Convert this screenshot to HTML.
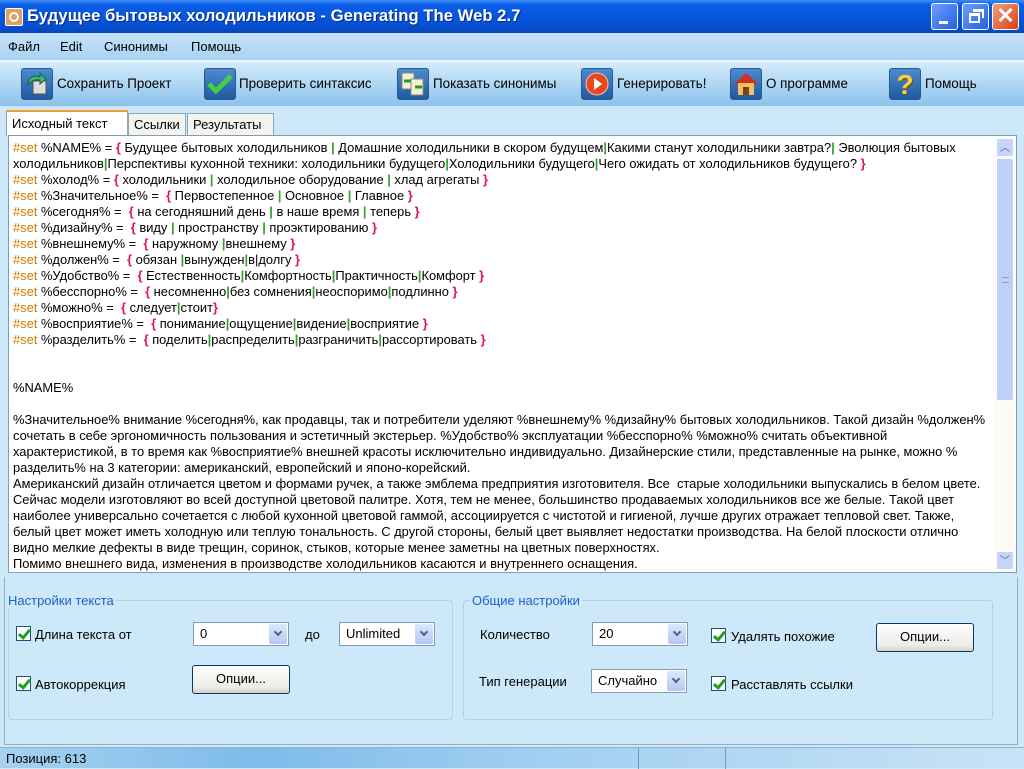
<!DOCTYPE html>
<html><head><meta charset="utf-8"><style>
*{box-sizing:border-box;margin:0;padding:0}
body{width:1024px;height:768px;overflow:hidden;background:#cde8f8;font-family:"Liberation Sans",sans-serif;font-size:13px;color:#000;position:relative}
.abs{position:absolute}
#title{left:0;top:0;width:1024px;height:33px;background:linear-gradient(#3a8cf6 0%,#0a5de6 15%,#0552d8 70%,#0646b8 100%)}
#title .t{left:27px;top:6px;color:#fff;font-weight:bold;font-size:16.7px;text-shadow:1px 1px #0a2a80;white-space:nowrap}
.wb{top:3px;width:27px;height:27px;border:1px solid #fff;border-radius:3px;background:linear-gradient(135deg,#6aa0ff,#2460e0);}
#menu{left:0;top:33px;width:1024px;height:27px;background:linear-gradient(#c6e2f8,#a9d3f3);}
#menu span{position:absolute;top:6px;font-size:13px}
#tb{left:0;top:60px;width:1024px;height:46px;border-top:2px solid #e9f5fd;background:linear-gradient(#d4ecfb,#a8d2f2 60%,#8cc2ec)}
.tbi{position:absolute;top:6px;width:32px;height:32px;border:1px solid #2a5a8a;border-radius:3px;background:linear-gradient(#4d8ad0,#1f5aa0)}
.tbt{position:absolute;top:14px;font-size:13.4px;white-space:nowrap}
.tab{position:absolute;background:#f4f4ee;border:1px solid #8ca6be;border-bottom:none;font-size:13px;padding:3px 5px 0}
#ed{left:8px;top:135px;width:1009px;height:438px;background:#fff;border:1px solid #7f9db9;overflow:hidden}
#txt{position:absolute;left:4px;top:4px;font-size:12.9px;line-height:16px;white-space:pre;letter-spacing:0}
.s{color:#d07a00}.b{color:#e0105a;font-weight:bold}.p{color:#2ca02c;font-weight:bold}
#sb{left:995px;top:137px;width:20px;height:434px;background:#fbfbf4}
.gb{position:absolute;border:1px solid #b7d0e2;border-radius:4px}
.gl{position:absolute;background:#cde8f8;color:#1f5fcf;font-size:13px;padding:0 2px}
.cb{position:absolute;width:15px;height:15px;border:1px solid #1c5180;background:#fff}
.cb:after{content:"";position:absolute;left:4px;top:0px;width:4px;height:9px;border:solid #20a020;border-width:0 3px 3px 0;transform:rotate(40deg)}
.lbl{position:absolute;font-size:13px;white-space:nowrap}
.combo{position:absolute;height:24px;background:#fff;border:1px solid #7f9db9;font-size:13px;padding:3px 6px}
.combo i{position:absolute;right:1px;top:1px;width:18px;height:20px;background:linear-gradient(#dce8fc,#b4c8f4);border-radius:2px}
.combo i:after{content:"";position:absolute;left:6px;top:5px;width:4px;height:4px;border:solid #4d6185;border-width:0 2px 2px 0;transform:rotate(45deg)}
.btn{position:absolute;height:29px;border:1px solid #003c74;border-radius:3px;background:linear-gradient(#fff,#ecebe6 80%,#d6d0c5);font-size:13px;text-align:center;line-height:26px}
#st{left:0;top:747px;width:1024px;height:21px;background:linear-gradient(90deg,#a7d1f1,#7dbbe9 25%,#9fcdf1 50%,#c8e3f6);border-top:1px solid #8fb4d4}
</style></head><body>
<div id="title" class="abs">
 <div class="abs" style="left:5px;top:8px;width:18px;height:18px;background:#e2a060;border:1px solid #fff;border-radius:2px"><div style="margin:3px;width:10px;height:10px;border:2px solid #fff;border-radius:50%"></div></div>
 <div class="t abs">Будущее бытовых холодильников - Generating The Web 2.7</div>
 <div class="wb abs" style="left:931px"><div style="position:absolute;left:7px;top:17px;width:9px;height:3px;background:#fff"></div></div>
 <div class="wb abs" style="left:962px"><div style="position:absolute;left:6px;top:9px;width:11px;height:10px;border:2px solid #fff;border-top-width:3px"></div><div style="position:absolute;left:10px;top:5px;width:11px;height:9px;border:2px solid #fff;border-top-width:3px;border-left:none;border-bottom:none"></div></div>
 <div class="wb abs" style="left:992px;background:linear-gradient(135deg,#f0a080,#d84010);color:#fff;font-weight:bold;font-size:22px;text-align:center;line-height:24px">✕</div>
</div>
<div id="menu" class="abs"><span style="left:8px">Файл</span><span style="left:60px">Edit</span><span style="left:104px">Синонимы</span><span style="left:191px">Помощь</span></div>
<div id="tb" class="abs">
 <div class="tbi" style="left:21px"><svg width="30" height="30"><rect x="11" y="12" width="13" height="13" fill="#ddd" stroke="#555"/><path d="M6 16 C6 8 12 6 18 8 L18 4 L24 10 L18 15 L18 11 C13 10 9 12 6 16Z" fill="#3cb878" stroke="#186040"/></svg></div><div class="tbt" style="left:57px">Сохранить Проект</div>
 <div class="tbi" style="left:204px"><svg width="30" height="30"><path d="M4 15 L11 22 L26 7" fill="none" stroke="#40d040" stroke-width="5"/></svg></div><div class="tbt" style="left:239px">Проверить синтаксис</div>
 <div class="tbi" style="left:397px"><svg width="30" height="30"><rect x="4" y="4" width="12" height="16" fill="#f4f0d0" stroke="#888"/><rect x="13" y="10" width="12" height="16" fill="#f4f0d0" stroke="#888"/><path d="M6 12h7M17 18h7" stroke="#20a020" stroke-width="3"/></svg></div><div class="tbt" style="left:433px">Показать синонимы</div>
 <div class="tbi" style="left:581px"><svg width="30" height="30"><circle cx="15" cy="15" r="11" fill="#e84820" stroke="#fbb" /><path d="M12 9 L20 15 L12 21Z" fill="#fff"/></svg></div><div class="tbt" style="left:617px">Генерировать!</div>
 <div class="tbi" style="left:730px"><svg width="30" height="30"><path d="M3 15 L15 4 L27 15Z" fill="#d03020"/><rect x="7" y="14" width="16" height="12" fill="#f0c060"/><rect x="12" y="18" width="6" height="8" fill="#804010"/></svg></div><div class="tbt" style="left:766px">О программе</div>
 <div class="tbi" style="left:889px"><div style="color:#f8d040;font-weight:bold;font-size:28px;text-align:center;line-height:32px;text-shadow:1px 1px #805000">?</div></div><div class="tbt" style="left:925px">Помощь</div>
</div>
<div class="tab" style="left:128px;top:113px;width:58px;height:22px">Ссылки</div>
<div class="tab" style="left:187px;top:113px;width:87px;height:22px">Результаты</div>
<div class="tab" style="left:6px;top:110px;width:122px;height:26px;background:#fff;border-top:2px solid #f0a030;padding-top:4px">Исходный текст</div>
<div id="ed" class="abs"><div id="txt"><span class="s">#set</span> %NAME% = <span class="b">{</span> Будущее бытовых холодильников <span class="p">|</span> Домашние холодильники в скором будущем<span class="p">|</span>Какими станут холодильники завтра?<span class="p">|</span> Эволюция бытовых
холодильников<span class="p">|</span>Перспективы кухонной техники: холодильники будущего<span class="p">|</span>Холодильники будущего<span class="p">|</span>Чего ожидать от холодильников будущего? <span class="b">}</span>
<span class="s">#set</span> %холод% = <span class="b">{</span> холодильники <span class="p">|</span> холодильное оборудование <span class="p">|</span> хлад агрегаты <span class="b">}</span>
<span class="s">#set</span> %Значительное% =  <span class="b">{</span> Первостепенное <span class="p">|</span> Основное <span class="p">|</span> Главное <span class="b">}</span>
<span class="s">#set</span> %сегодня% =  <span class="b">{</span> на сегодняшний день <span class="p">|</span> в наше время <span class="p">|</span> теперь <span class="b">}</span>
<span class="s">#set</span> %дизайну% =  <span class="b">{</span> виду <span class="p">|</span> пространству <span class="p">|</span> проэктированию <span class="b">}</span>
<span class="s">#set</span> %внешнему% =  <span class="b">{</span> наружному <span class="p">|</span>внешнему <span class="b">}</span>
<span class="s">#set</span> %должен% =  <span class="b">{</span> обязан <span class="p">|</span>вынужден<span class="p">|</span>в|долгу <span class="b">}</span>
<span class="s">#set</span> %Удобство% =  <span class="b">{</span> Естественность<span class="p">|</span>Комфортность<span class="p">|</span>Практичность<span class="p">|</span>Комфорт <span class="b">}</span>
<span class="s">#set</span> %бесспорно% =  <span class="b">{</span> несомненно<span class="p">|</span>без сомнения<span class="p">|</span>неоспоримо<span class="p">|</span>подлинно <span class="b">}</span>
<span class="s">#set</span> %можно% =  <span class="b">{</span> следует<span class="p">|</span>стоит<span class="b">}</span>
<span class="s">#set</span> %восприятие% =  <span class="b">{</span> понимание<span class="p">|</span>ощущение<span class="p">|</span>видение<span class="p">|</span>восприятие <span class="b">}</span>
<span class="s">#set</span> %разделить% =  <span class="b">{</span> поделить<span class="p">|</span>распределить<span class="p">|</span>разграничить<span class="p">|</span>рассортировать <span class="b">}</span>


%NAME%

%Значительное% внимание %сегодня%, как продавцы, так и потребители уделяют %внешнему% %дизайну% бытовых холодильников. Такой дизайн %должен%
сочетать в себе эргономичность пользования и эстетичный экстерьер. %Удобство% эксплуатации %бесспорно% %можно% считать объективной
характеристикой, в то время как %восприятие% внешней красоты исключительно индивидуально. Дизайнерские стили, представленные на рынке, можно %
разделить% на 3 категории: американский, европейский и японо-корейский.
Американский дизайн отличается цветом и формами ручек, а также эмблема предприятия изготовителя. Все  старые холодильники выпускались в белом цвете.
Сейчас модели изготовляют во всей доступной цветовой палитре. Хотя, тем не менее, большинство продаваемых холодильников все же белые. Такой цвет
наиболее универсально сочетается с любой кухонной цветовой гаммой, ассоциируется с чистотой и гигиеной, лучше других отражает тепловой свет. Также,
белый цвет может иметь холодную или теплую тональность. С другой стороны, белый цвет выявляет недостатки производства. На белой плоскости отлично
видно мелкие дефекты в виде трещин, соринок, стыков, которые менее заметны на цветных поверхностях.
Помимо внешнего вида, изменения в производстве холодильников касаются и внутреннего оснащения.</div></div>
<div id="sb" class="abs">
 <div class="abs" style="left:1px;top:1px;width:18px;height:19px;background:#c4d4fa;border:1px solid #fff;border-radius:2px;text-align:center;font-size:10px;color:#4d6185">︿</div>
 <div class="abs" style="left:1px;top:21px;width:18px;height:243px;background:#bcd0fa;border:1px solid #fff;border-radius:2px"><div style="position:absolute;left:5px;top:118px;width:7px;height:6px;border-top:1px solid #8aa;border-bottom:1px solid #8aa"></div></div>
 <div class="abs" style="left:1px;top:414px;width:18px;height:19px;background:#c4d4fa;border:1px solid #fff;border-radius:2px;text-align:center;font-size:10px;color:#4d6185;line-height:19px">﹀</div>
</div>
<div class="abs" style="left:4px;top:577px;width:1014px;height:168px;border:1px solid #9ab;border-top:none"></div>
<div class="gb" style="left:8px;top:600px;width:445px;height:120px"></div>
<div class="gl" style="left:6px;top:593px">Настройки текста</div>
<div class="cb" style="left:16px;top:626px"></div><div class="lbl" style="left:35px;top:627px">Длина текста от</div>
<div class="combo" style="left:193px;top:622px;width:96px">0<i></i></div>
<div class="lbl" style="left:305px;top:627px">до</div>
<div class="combo" style="left:339px;top:622px;width:96px">Unlimited<i></i></div>
<div class="cb" style="left:16px;top:676px"></div><div class="lbl" style="left:35px;top:677px">Автокоррекция</div>
<div class="btn" style="left:192px;top:665px;width:98px">Опции...</div>
<div class="gb" style="left:463px;top:600px;width:530px;height:120px"></div>
<div class="gl" style="left:470px;top:593px">Общие настройки</div>
<div class="lbl" style="left:480px;top:627px">Количество</div>
<div class="combo" style="left:592px;top:622px;width:96px">20<i></i></div>
<div class="cb" style="left:711px;top:628px"></div><div class="lbl" style="left:731px;top:629px">Удалять похожие</div>
<div class="btn" style="left:876px;top:623px;width:98px">Опции...</div>
<div class="lbl" style="left:479px;top:674px">Тип генерации</div>
<div class="combo" style="left:591px;top:669px;width:96px">Случайно<i></i></div>
<div class="cb" style="left:711px;top:676px"></div><div class="lbl" style="left:731px;top:677px">Расставлять ссылки</div>
<div id="st" class="abs"><span style="position:absolute;left:6px;top:3px;font-size:13px">Позиция: 613</span>
<div class="abs" style="left:638px;top:0;width:1px;height:21px;background:#6a9ccc"></div><div class="abs" style="left:725px;top:0;width:1px;height:21px;background:#6a9ccc"></div></div>
</body></html>
